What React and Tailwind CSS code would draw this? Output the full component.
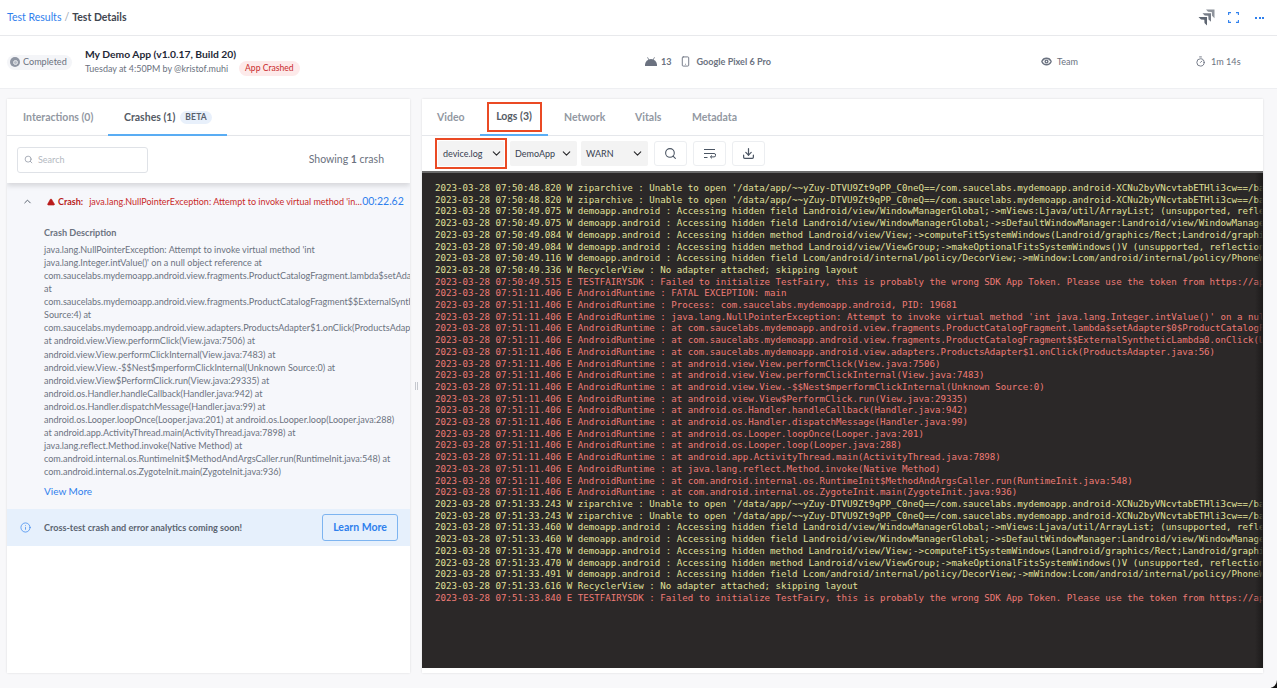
import { ChevronDown, ChevronUp, Search, Info, Download, Smartphone, Eye, Timer, TriangleAlert } from 'lucide-react';

const APK = "/data/app/~~yZuy-DTVU9Zt9qPP_C0neQ==/com.saucelabs.mydemoapp.android-XCNu2byVNcvtabETHli3cw==/base.apk'";
const warnBlock = (t) => [
  ['W', `${t[0]} W ziparchive : Unable to open '${APK}`],
  ['W', `${t[0]} W ziparchive : Unable to open '${APK}`],
  ['W', `${t[1]} W demoapp.android : Accessing hidden field Landroid/view/WindowManagerGlobal;->mViews:Ljava/util/ArrayList; (unsupported, reflection, allowed)`],
  ['W', `${t[1]} W demoapp.android : Accessing hidden field Landroid/view/WindowManagerGlobal;->sDefaultWindowManager:Landroid/view/WindowManager; (unsupported)`],
  ['W', `${t[2]} W demoapp.android : Accessing hidden method Landroid/view/View;->computeFitSystemWindows(Landroid/graphics/Rect;Landroid/graphics/Rect;)Z`],
  ['W', `${t[2]} W demoapp.android : Accessing hidden method Landroid/view/ViewGroup;->makeOptionalFitsSystemWindows()V (unsupported, reflection, allowed)`],
  ['W', `${t[3]} W demoapp.android : Accessing hidden field Lcom/android/internal/policy/DecorView;->mWindow:Lcom/android/internal/policy/PhoneWindow;`],
  ['W', `${t[4]} W RecyclerView : No adapter attached; skipping layout`],
  ['E', `${t[5]} E TESTFAIRYSDK : Failed to initialize TestFairy, this is probably the wrong SDK App Token. Please use the token from https://app.testfairy.com`],
];

const RT = '2023-03-28 07:51:11.406 E AndroidRuntime : ';
const runtime = [
  'FATAL EXCEPTION: main',
  'Process: com.saucelabs.mydemoapp.android, PID: 19681',
  "java.lang.NullPointerException: Attempt to invoke virtual method 'int java.lang.Integer.intValue()' on a null object reference",
  'at com.saucelabs.mydemoapp.android.view.fragments.ProductCatalogFragment.lambda$setAdapter$0$ProductCatalogFragment(ProductCatalogFragment.java:1)',
  'at com.saucelabs.mydemoapp.android.view.fragments.ProductCatalogFragment$$ExternalSyntheticLambda0.onClick(Unknown Source:4)',
  'at com.saucelabs.mydemoapp.android.view.adapters.ProductsAdapter$1.onClick(ProductsAdapter.java:56)',
  'at android.view.View.performClick(View.java:7506)',
  'at android.view.View.performClickInternal(View.java:7483)',
  'at android.view.View.-$$Nest$mperformClickInternal(Unknown Source:0)',
  'at android.view.View$PerformClick.run(View.java:29335)',
  'at android.os.Handler.handleCallback(Handler.java:942)',
  'at android.os.Handler.dispatchMessage(Handler.java:99)',
  'at android.os.Looper.loopOnce(Looper.java:201)',
  'at android.os.Looper.loop(Looper.java:288)',
  'at android.app.ActivityThread.main(ActivityThread.java:7898)',
  'at java.lang.reflect.Method.invoke(Native Method)',
  'at com.android.internal.os.RuntimeInit$MethodAndArgsCaller.run(RuntimeInit.java:548)',
  'at com.android.internal.os.ZygoteInit.main(ZygoteInit.java:936)',
].map((s) => ['E', RT + s]);

const LOG_LINES = [
  ...warnBlock(['2023-03-28 07:50:48.820', '2023-03-28 07:50:49.075', '2023-03-28 07:50:49.084', '2023-03-28 07:50:49.116', '2023-03-28 07:50:49.336', '2023-03-28 07:50:49.515']),
  ...runtime,
  ...warnBlock(['2023-03-28 07:51:33.243', '2023-03-28 07:51:33.460', '2023-03-28 07:51:33.470', '2023-03-28 07:51:33.491', '2023-03-28 07:51:33.616', '2023-03-28 07:51:33.840']),
];

const CRASH_LINES = [
  "java.lang.NullPointerException: Attempt to invoke virtual method 'int",
  "java.lang.Integer.intValue()' on a null object reference at",
  'com.saucelabs.mydemoapp.android.view.fragments.ProductCatalogFragment.lambda$setAdapter$0$ProductCatalogFragment(ProductCatalogFragment.java:1)',
  'at',
  'com.saucelabs.mydemoapp.android.view.fragments.ProductCatalogFragment$$ExternalSyntheticLambda0.onClick(Unknown',
  'Source:4) at',
  'com.saucelabs.mydemoapp.android.view.adapters.ProductsAdapter$1.onClick(ProductsAdapter.java:56)',
  'at android.view.View.performClick(View.java:7506) at',
  'android.view.View.performClickInternal(View.java:7483) at',
  'android.view.View.-$$Nest$mperformClickInternal(Unknown Source:0) at',
  'android.view.View$PerformClick.run(View.java:29335) at',
  'android.os.Handler.handleCallback(Handler.java:942) at',
  'android.os.Handler.dispatchMessage(Handler.java:99) at',
  'android.os.Looper.loopOnce(Looper.java:201) at android.os.Looper.loop(Looper.java:288)',
  'at android.app.ActivityThread.main(ActivityThread.java:7898) at',
  'java.lang.reflect.Method.invoke(Native Method) at',
  'com.android.internal.os.RuntimeInit$MethodAndArgsCaller.run(RuntimeInit.java:548) at',
  'com.android.internal.os.ZygoteInit.main(ZygoteInit.java:936)',
];

function JiraMark() {
  return (
    <svg width="17" height="17" viewBox="0 0 17 17" fill="#5f6672">
      <path d="M8 .5h8.5v8.7L14 6.8 13.8 3 10 2.8z" opacity="0.7" />
      <path d="M4.5 4.2h8.5v8.6l-2.5-2.4-.2-3.6-3.6-.2z" opacity="0.85" />
      <path d="M.5 8H9v8.5L6.5 14 6.3 10.8 3 10.5z" />
    </svg>
  );
}

function FullscreenIcon() {
  return (
    <svg width="11" height="11" viewBox="0 0 11 11" fill="none" stroke="#2f80ed" strokeWidth="1.1">
      <path d="M.6 3V.6H3M8 .6h2.4V3M10.4 8v2.4H8M3 10.4H.6V8" />
    </svg>
  );
}

function AndroidIcon() {
  return (
    <svg width="12" height="9" viewBox="0 0 12 9" fill="#6b7280">
      <path d="M0 9a6 6 0 0 1 12 0z" transform="translate(0 -1)" />
      <path d="M2.5.3 4 3M9.5.3 8 3" stroke="#6b7280" strokeWidth="0.8" />
      <rect x="0" y="7.6" width="12" height="1.4" />
    </svg>
  );
}

function LogSelect({ label, width, right }) {
  return (
    <div className={`${width} ${right} h-[25px] flex items-center justify-between pl-[5px] bg-[#f3f3f3] rounded-[2px] text-[9px] text-[#374151]`}>
      <span>{label}</span>
      <ChevronDown size={13} strokeWidth={2} color="#27272a" />
    </div>
  );
}

function ToolButton({ children }) {
  return (
    <div className="w-[33px] h-[25px] flex items-center justify-center bg-white border border-[#eceef1] rounded-[3px] text-[#4b5563]">
      {children}
    </div>
  );
}

export default function App() {
  return (
    <div className="relative w-[1277px] h-[688px] overflow-hidden bg-[#f8f8fa] flex flex-col font-['Lato','Noto_Sans',sans-serif] text-[#374151]">
      {/* Breadcrumb */}
      <div className="h-[36px] shrink-0 bg-white border-b border-[#e8e9ec] flex items-center justify-between pl-[7px] pr-[13px]">
        <div className="text-[10.5px] flex gap-[3px]">
          <span className="text-[#2f80ed]">Test Results</span>
          <span className="text-[#9ca3af]">/</span>
          <span className="font-bold text-[#3f4650]">Test Details</span>
        </div>
        <div className="flex items-center">
          <JiraMark />
          <div className="ml-[13px]"><FullscreenIcon /></div>
          <div className="ml-[16px] flex gap-[1.5px]">
            <span className="w-[2px] h-[2px] bg-[#2f80ed]" />
            <span className="w-[2px] h-[2px] bg-[#2f80ed]" />
            <span className="w-[2px] h-[2px] bg-[#2f80ed]" />
          </div>
        </div>
      </div>

      {/* Test summary */}
      <div className="h-[53px] shrink-0 bg-white border-b border-[#eeeff2] flex items-center text-[9.1px] text-[#6b7280]">
        <div className="w-[645px] flex items-center pl-[7px]">
          <div className="w-[65px] h-[15px] rounded-full bg-[#f4f5f8] flex items-center pl-[3px] gap-[3px]">
            <span className="w-[10px] h-[10px] rounded-full bg-[#8f96a3] flex items-center justify-center">
              <span className="w-[5px] h-[5px] rounded-full bg-[#b9bec8] border border-[#e5e7eb]" />
            </span>
            <span>Completed</span>
          </div>
          <div className="ml-[13px] -mt-[1px]">
            <div className="text-[10.3px] font-bold text-[#1f2937] leading-[14px]">My Demo App (v1.0.17, Build 20)</div>
            <div className="flex items-center gap-[11px] leading-[15px]">
              <span className="text-[8.95px]">Tuesday at 4:50PM by @kristof.muhi</span>
              <span className="h-[15px] px-[6px] rounded-full bg-[#fdeaea] text-[#c92a2a] text-[8.6px] flex items-center">App Crashed</span>
            </div>
          </div>
        </div>
        <div className="w-[396px] flex items-center -mt-[1px]">
          <AndroidIcon />
          <span className="ml-[4px] font-bold">13</span>
          <Smartphone size={11} className="ml-[8px]" />
          <span className="ml-[6px] font-bold">Google Pixel 6 Pro</span>
        </div>
        <div className="w-[154px] flex items-center -mt-[1px]">
          <Eye size={11} strokeWidth={3} />
          <span className="ml-[5px]">Team</span>
        </div>
        <div className="flex items-center -mt-[1px]">
          <Timer size={11} />
          <span className="ml-[5px]">1m 14s</span>
        </div>
      </div>

      {/* Panels */}
      <div className="flex-1 min-h-0 flex pl-[7px] pr-[14px] pt-[10px] pb-[15px]">
        <div className="w-[403px] shrink-0 bg-white shadow-[0_0_2px_rgba(0,0,0,0.12)] flex flex-col overflow-hidden">
          <div className="h-[37px] shrink-0 border-b border-[#e5e7eb] flex items-stretch text-[10.5px] font-bold">
            <div className="w-[101px] pl-[16px] pt-[2px] flex items-center text-[#9298a2]">Interactions (0)</div>
            <div className="w-[119px] pl-[16px] pt-[2px] flex items-center gap-[5px] text-[#555b65] border-b-2 border-[#5aaef5] h-[37px]">
              <span>Crashes (1)</span>
              <span className="h-[13px] px-[5px] rounded-full bg-[#e8f0fb] text-[#58606c] text-[8.5px] flex items-center tracking-[0.2px]">BETA</span>
            </div>
          </div>
          <div className="h-[47px] shrink-0 flex items-center justify-between pl-[10px] pr-[26px] shadow-[0_3px_5px_rgba(0,0,0,0.13)] relative">
            <div className="w-[131px] h-[26px] border border-[#dfe2e7] rounded-[3px] flex items-center pl-[6px] gap-[5px] text-[9px] text-[#b4b9c1]">
              <Search size={9} color="#8f96a3" />
              <span>Search</span>
            </div>
            <div className="text-[10.5px] text-[#6b7280]">Showing <b>1</b> crash</div>
          </div>

          <div className="bg-[#f6f7fb]">
            <div className="h-[37px] flex items-center pl-[15px] text-[9px] whitespace-nowrap">
              <ChevronUp size={11} color="#4b5563" />
              <TriangleAlert size={8} fill="#b91c1c" color="#b91c1c" className="ml-[14px]" />
              <span className="ml-[3px] font-bold text-[#b91c1c]">Crash:</span>
              <span className="ml-[6px] w-[276px] truncate text-[#c92a2a]">java.lang.NullPointerException: Attempt to invoke virtual method 'int java.lang.Integer</span>
              <span className="text-[#2f80ed] text-[10.5px] -ml-[3px]">00:22.62</span>
            </div>
            <div className="pl-[37px] pt-[6px] pb-[11px] overflow-hidden">
              <div className="text-[9.1px] font-bold text-[#6b7280] leading-[13px]">Crash Description</div>
              <div className="mt-[4px] text-[9.05px] leading-[13.06px] text-[#6b7280] whitespace-nowrap">
                {CRASH_LINES.map((line, i) => (
                  <div key={i}>{line}</div>
                ))}
              </div>
              <div className="mt-[7px] text-[10px] text-[#2f80ed] leading-[13px]">View More</div>
            </div>
          </div>

          <div className="h-[37px] shrink-0 bg-[#e6f0fc] flex items-center justify-between pl-[13px] pr-[12px]">
            <div className="flex items-center gap-[13px] text-[9.1px] font-bold text-[#5b6470]">
              <Info size={11} color="#2f80ed" strokeWidth={1.5} />
              <span>Cross-test crash and error analytics coming soon!</span>
            </div>
            <div className="w-[76px] h-[27px] border border-[#7db4f0] rounded-[3px] flex items-center justify-center text-[10.5px] font-bold text-[#2f80ed]">
              Learn More
            </div>
          </div>
        </div>

        {/* Splitter */}
        <div className="w-[12px] shrink-0 flex items-center justify-center gap-[1px]">
          <span className="w-[1px] h-[8px] bg-[#c5c8ce]" />
          <span className="w-[1px] h-[8px] bg-[#c5c8ce]" />
        </div>

        <div className="flex-1 min-w-0 bg-white shadow-[0_0_2px_rgba(0,0,0,0.12)] flex flex-col overflow-hidden">
          <div className="h-[37px] shrink-0 border-b border-[#e5e7eb] flex items-stretch text-[10.5px] font-bold text-[#9298a2]">
            <div className="w-[58px] pl-[15px] pt-[2px] flex items-center">Video</div>
            <div className="w-[68px] h-[37px] border-b-2 border-[#5aaef5] flex justify-center pt-[3px]">
              <div className="w-[55px] h-[30px] border-2 border-[#ea4a24] flex items-center justify-center text-[#555b65]">Logs (3)</div>
            </div>
            <div className="ml-[16px] w-[71px] pt-[2px] flex items-center">Network</div>
            <div className="w-[57px] pt-[2px] flex items-center">Vitals</div>
            <div className="pt-[2px] flex items-center">Metadata</div>
          </div>
          <div className="h-[35px] shrink-0 flex items-center pl-[13px]">
            <div className="border-2 border-[#ea4a24] p-[1px] flex">
              <LogSelect label="device.log" width="w-[66px]" right="pr-[1px]" />
            </div>
            <div className="ml-[3px]"><LogSelect label="DemoApp" width="w-[67px]" right="pr-[4px]" /></div>
            <div className="ml-[4px]"><LogSelect label="WARN" width="w-[67px]" right="pr-[4px]" /></div>
            <div className="ml-[6px] flex gap-[6px]">
              <ToolButton><Search size={13} /></ToolButton>
              <ToolButton>
                <svg width="13" height="11" viewBox="0 0 13 11" fill="none" stroke="#4b5563" strokeWidth="1">
                  <path d="M1 1.5h11M1 5.5h10a1.6 1.6 0 0 1 0 3.4H7.5M9 7.4 7.4 8.9 9 10.4M1 9.5h3.5" />
                </svg>
              </ToolButton>
              <ToolButton><Download size={13} strokeWidth={2.25} /></ToolButton>
            </div>
          </div>
          <div className="h-[497px] shrink-0 bg-[#2b2828] border-t-2 border-[#6b6b6b] relative overflow-hidden pt-[10px] pl-[13px] font-['DejaVu_Sans_Mono',monospace] text-[9.14px] leading-[11.71px] whitespace-pre">
            {LOG_LINES.map(([level, text], i) => (
              <div key={i} className={level === 'W' ? 'text-[#e0e09a]' : 'text-[#ee7b76]'}>{text}</div>
            ))}
            <div className="absolute top-0 right-0 bottom-0 w-[8px] bg-gradient-to-r from-transparent to-[#1c1a1a]" />
          </div>
        </div>
      </div>

      {/* Rounded window corner of the capture */}
      <svg className="absolute right-0 bottom-0" width="8" height="8" viewBox="0 0 8 8" fill="#111">
        <path d="M8 0v8H0a8 8 0 0 0 8-8z" />
      </svg>
    </div>
  );
}
